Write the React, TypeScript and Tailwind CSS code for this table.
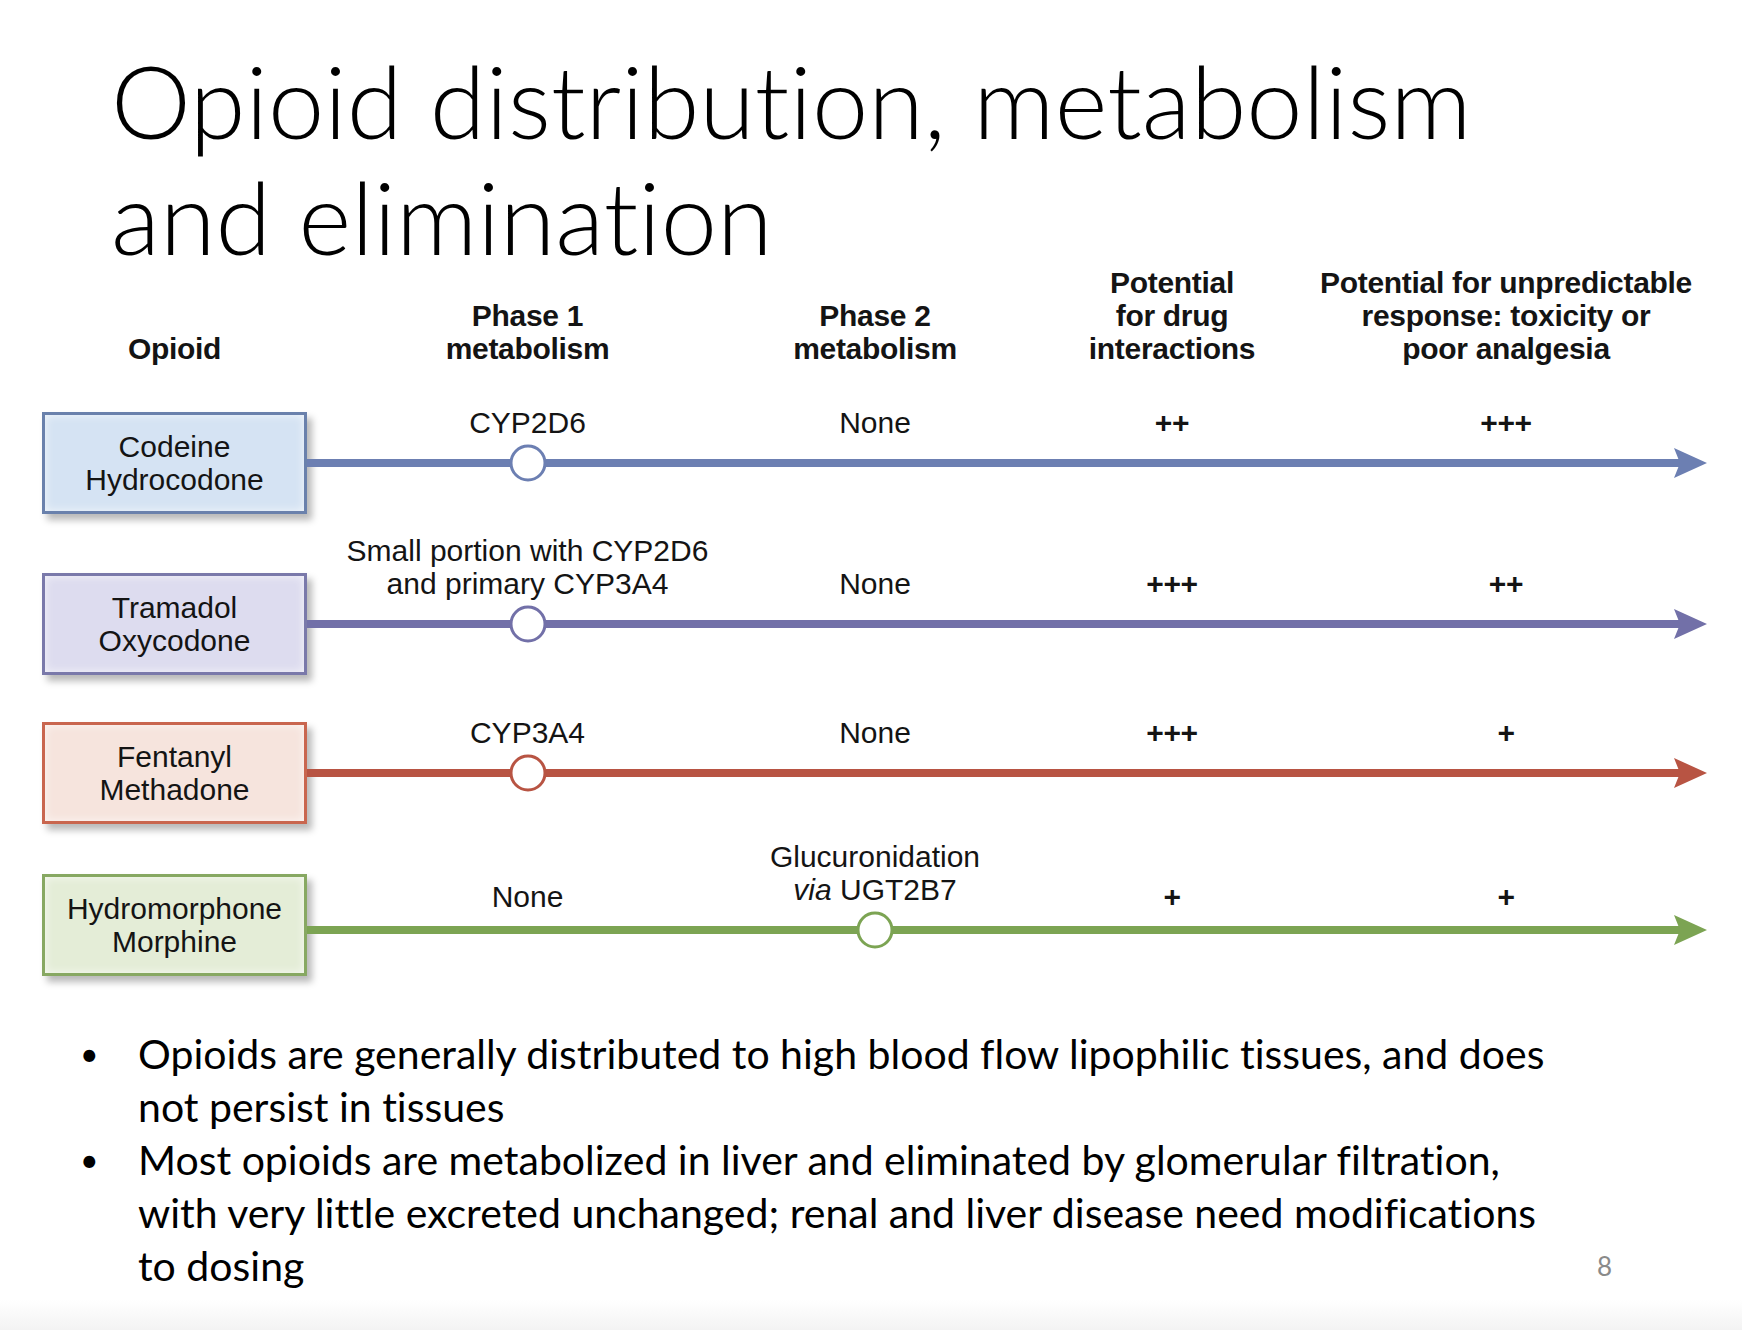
import React from 'react';

type Row = {
  names: string[];
  box: string;
  line: string;
  ring: string;
  arrow: string;
  cells: React.ReactNode[][];
  shift?: boolean[];
  node: number;
  mt: string;
  boxMb?: string;
};

const diagramFont = { fontFamily: '"Liberation Sans", Arial, sans-serif' };
const slideFont = { fontFamily: 'Lato, "Open Sans", sans-serif' };

const rows: Row[] = [
  {
    names: ['Codeine', 'Hydrocodone'],
    box: 'bg-[#d5e3f3] border-[#6a81ac]',
    line: 'bg-[#6c7fb2]',
    ring: 'border-[#6c7fb2]',
    arrow: '#6c7fb2',
    cells: [['CYP2D6'], ['None'], ['++'], ['+++']],
    node: 0,
    mt: 'mt-[41px]',
  },
  {
    names: ['Tramadol', 'Oxycodone'],
    box: 'bg-[#dddcef] border-[#7a79aa]',
    line: 'bg-[#7270a8]',
    ring: 'border-[#7270a8]',
    arrow: '#7270a8',
    cells: [['Small portion with CYP2D6', 'and primary CYP3A4'], ['None'], ['+++'], ['++']],
    node: 0,
    mt: 'mt-[20px]',
  },
  {
    names: ['Fentanyl', 'Methadone'],
    box: 'bg-[#f6e4dd] border-[#c9664f]',
    line: 'bg-[#b85443]',
    ring: 'border-[#b85443]',
    arrow: '#b85443',
    cells: [['CYP3A4'], ['None'], ['+++'], ['+']],
    node: 0,
    mt: 'mt-[41px]',
  },
  {
    names: ['Hydromorphone', 'Morphine'],
    box: 'bg-[#e4edd7] border-[#87a862]',
    line: 'bg-[#7ca453]',
    ring: 'border-[#7ca453]',
    arrow: '#7ca453',
    cells: [
      ['None'],
      [
        'Glucuronidation',
        <>
          <i>via</i> UGT2B7
        </>,
      ],
      ['+'],
      ['+'],
    ],
    shift: [true, false, true, true],
    node: 1,
    mt: 'mt-[16px]',
    boxMb: 'mb-[5px]',
  },
];

const headers: React.ReactNode[][] = [
  ['Opioid'],
  ['Phase 1', 'metabolism'],
  ['Phase 2', 'metabolism'],
  ['Potential', 'for drug', 'interactions'],
  ['Potential for unpredictable', 'response: toxicity or', 'poor analgesia'],
];

const Label: React.FC<{ lines: React.ReactNode[]; bold?: boolean; shift?: boolean }> = ({ lines, bold, shift }) => (
  <div className={`flex flex-col items-center ${shift ? 'translate-y-[7px]' : ''}`}>
    {lines.map((l, i) => (
      <div
        key={i}
        className={`whitespace-nowrap text-[30px] leading-[33px] text-[#141414] ${bold ? 'font-bold tracking-[-0.3px]' : ''}`}
      >
        {l}
      </div>
    ))}
  </div>
);

const DrugRow: React.FC<{ row: Row }> = ({ row }) => (
  <div className={`flex items-end pl-[42px] ${row.mt}`}>
    {/* Opioid box */}
    <div
      className={`flex h-[102px] w-[265px] flex-none flex-col items-center justify-center border-[3px] shadow-[5px_6px_7px_rgba(0,0,0,0.28),inset_0_0_10px_rgba(255,255,255,0.7)] ${row.box} ${row.boxMb ?? ''}`}
    >
      {row.names.map((n) => (
        <div key={n} className="whitespace-nowrap text-[30px] leading-[33px] text-[#141414]">
          {n}
        </div>
      ))}
    </div>

    {/* Timeline */}
    <div className="flex flex-col">
      <div className="grid grid-cols-[441px_254px_340px_328px] items-end">
        {row.cells.map((c, i) => (
          <Label key={i} lines={c} bold={i >= 2} shift={row.shift?.[i]} />
        ))}
      </div>
      <div className="mb-[36px] mt-[9px] grid h-[30px] grid-cols-[441px_254px_340px_328px_37px] items-center">
        {[0, 1, 2, 3].map((i) => (
          <div key={i} className={`relative h-[8px] ${row.line}`}>
            {row.node === i && (
              <div
                className={`absolute left-1/2 top-1/2 h-[37px] w-[37px] -translate-x-1/2 -translate-y-1/2 rounded-full border-[3px] bg-white ${row.ring}`}
              />
            )}
          </div>
        ))}
        <svg width="37" height="30" viewBox="0 0 37 30">
          <rect x="0" y="11" width="10" height="8" fill={row.arrow} />
          <polygon points="4,0 37,15 4,30 10,15" fill={row.arrow} />
        </svg>
      </div>
    </div>
  </div>
);

export default function App() {
  return (
    <div className="flex h-[1330px] w-[1742px] flex-col overflow-hidden bg-white text-black">
      {/* Title */}
      <div className="h-[266px] flex-none pl-[111px] pt-[42px] [font-variant-ligatures:none]" style={slideFont}>
        <h1 className="text-[101px] font-light leading-[116px] text-black">
          Opioid distribution, metabolism
          <br />
          and elimination
        </h1>
      </div>

      {/* Diagram */}
      <div style={diagramFont}>
        <div className="grid grid-cols-[265px_441px_254px_340px_328px] items-end pl-[42px]">
          {headers.map((h, i) => (
            <Label key={i} lines={h} bold />
          ))}
        </div>
        {rows.map((r) => (
          <DrugRow key={r.names[0]} row={r} />
        ))}
      </div>

      {/* Bullets */}
      <div className="mt-[46px] flex items-end [font-variant-ligatures:none]" style={slideFont}>
        <ul className="w-[1597px] flex-none pl-[80px] text-[41px] leading-[53px] text-black">
          <li className="flex">
            <span className="w-[58px] flex-none text-[32px]">•</span>
            <span>
              Opioids are generally distributed to high blood flow lipophilic tissues, and does
              <br />
              not persist in tissues
            </span>
          </li>
          <li className="flex">
            <span className="w-[58px] flex-none text-[32px]">•</span>
            <span>
              Most opioids are metabolized in liver and eliminated by glomerular filtration,
              <br />
              with very little excreted unchanged; renal and liver disease need modifications
              <br />
              to dosing
            </span>
          </li>
        </ul>
        <div className="pb-[13px] text-[26px] leading-[26px] text-[#8a8a8a]">8</div>
      </div>

      <div className="mt-[8px] flex-1 bg-linear-to-b from-white to-[#f3f3f3]" />
    </div>
  );
}
